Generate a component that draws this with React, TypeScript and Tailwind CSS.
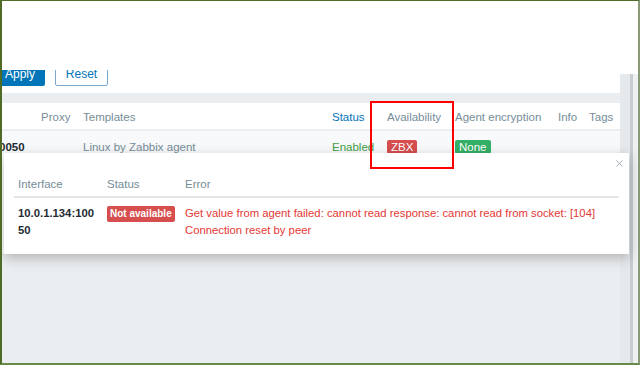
import { X } from "lucide-react";

const font = { fontFamily: '"Liberation Sans", Arial, sans-serif' };

function HeaderRow() {
  return (
    <div className="flex h-[28px] items-center border-b-2 border-[#ebeef0] bg-white pt-[4px] text-[11.5px] text-[#768d99]">
      <div className="w-[39px]" />
      <div className="w-[42px]">Proxy</div>
      <div className="w-[249px]">Templates</div>
      <div className="w-[55px] text-[#0275b8]">Status</div>
      <div className="w-[68px]">Availability</div>
      <div className="w-[103px]">Agent encryption</div>
      <div className="w-[31px]">Info</div>
      <div>Tags</div>
    </div>
  );
}

function DataRow() {
  return (
    <div className="flex h-[24px] items-center bg-[#f8f9fa] pt-[9px] text-[11.5px] text-[#768d99]">
      <div className="-ml-[3px] w-[42px] font-bold text-[#1f2c33]">0050</div>
      <div className="w-[42px]" />
      <div className="w-[249px]">Linux by Zabbix agent</div>
      <div className="w-[55px] text-[#429e47]">Enabled</div>
      <div className="w-[68px]">
        <span className="rounded-[2px] bg-[#d64e4e] px-[4px] py-[1px] text-white">ZBX</span>
      </div>
      <div className="w-[103px]">
        <span className="rounded-[2px] bg-[#34af67] px-[4px] py-[1px] text-white">None</span>
      </div>
    </div>
  );
}

function Popup() {
  return (
    <div className="absolute left-[2px] top-[152px] w-[625px] bg-white px-[10px] pb-[15px] pt-[20px] shadow-[0_4px_12px_rgba(0,0,0,0.25)]">
      <X className="absolute right-[4px] top-[5px] h-[11px] w-[11px] text-[#99a7b0]" strokeWidth={2} />
      <div className="flex h-[25px] items-center border-b-2 border-[#e3e7ea] text-[11.5px] text-[#768d99]">
        <div className="w-[89px] pl-[4px]">Interface</div>
        <div className="w-[78px] pl-[4px]">Status</div>
        <div className="pl-[4px]">Error</div>
      </div>
      <div className="flex pt-[7px] text-[11.3px] leading-[17px]">
        <div className="w-[89px] pl-[4px] font-bold text-[#1f2c33]">
          10.0.1.134:100
          <br />
          50
        </div>
        <div className="w-[78px] pl-[4px]">
          <span className="inline-block whitespace-nowrap rounded-[2px] bg-[#d64e4e] px-[3px] text-[10px] font-bold leading-[16px] text-white">
            Not available
          </span>
        </div>
        <div className="whitespace-nowrap pl-[4px] text-[#e33734]">
          Get value from agent failed: cannot read response: cannot read from socket: [104]
          <br />
          Connection reset by peer
        </div>
      </div>
    </div>
  );
}

export default function App() {
  return (
    <div
      style={font}
      className="relative h-[365px] w-[640px] overflow-hidden border-b-2 border-l-2 border-r-2 border-t-[1px] border-b-[#6b8a4a] border-l-[#4f6b26] border-r-[#8a9a78] border-t-[#4f6b26] bg-white"
    >
      <div className="flex h-full flex-col">
        <div className="h-[69px] bg-white" />
        <div className="flex flex-1">
          {/* main content */}
          <div className="flex w-[618px] flex-col">
            <div className="relative h-[23px] overflow-hidden bg-white">
              <div className="-mt-[8px] flex items-center gap-[10px] text-[12px]">
                <button className="-ml-[7px] h-[24px] w-[50px] rounded-[2px] bg-[#0275b8] text-white">Apply</button>
                <button className="h-[24px] w-[53px] rounded-[2px] border border-[#7ea9cf] bg-white text-[#0275b8]">
                  Reset
                </button>
              </div>
            </div>
            <div className="h-[10px] bg-[#ebeef0]" />
            <HeaderRow />
            <DataRow />
            <div className="h-[98px] bg-white" />
            <div className="flex-1 bg-[#ebeef0]" />
          </div>
          {/* scroll strip */}
          <div className="flex flex-1 flex-col">
            <div className="h-[4px] bg-white" />
            <div className="flex flex-1">
              <div className="w-[10px] bg-[#e6e9ec]" />
              <div className="w-[3px] bg-[#c8cdd1]" />
              <div className="flex-1 bg-[#eef0f2]" />
            </div>
          </div>
        </div>
      </div>
      <Popup />
      <div className="absolute left-[368px] top-[100px] h-[68px] w-[84px] border-2 border-[#ff0000]" />
    </div>
  );
}
